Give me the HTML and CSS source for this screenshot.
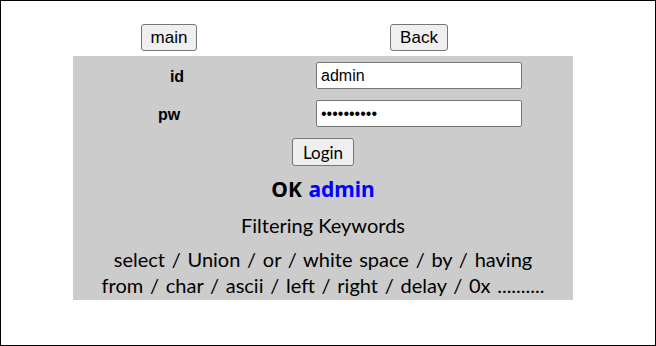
FILE: index.html
```html
<html>
	<head>
		<title>Login</title>
		<link rel="stylesheet" href="styles.css">
	</head>
	<body>
		<div class="Frame">
			<div class="TopRow">
				<div class="TopCell Left"><button class="Btn">main</button></div>
				<div class="TopCell Right"><button class="Btn">Back</button></div>
			</div>

			<div class="Box">
				<form class="LoginForm">
					<div class="Label LabelId">id</div>
					<input class="Field" type="text" value="admin"/>
					<div class="Label LabelPw">pw</div>
					<input class="Field" type="password" value="adminadmin"/>
				</form>
				<div class="LoginRow">
					<button class="Btn BtnLogin">Login</button>
				</div>
				<div class="Result">OK <span class="User">admin</span></div>
				<div class="Title">Filtering Keywords</div>
				<div class="Keywords">
					select / Union / or / white space / by / having<br/>
					from / char / ascii / left / right / delay / 0x ..........
				</div>
			</div>
		</div>
	</body>
</html>
```

FILE: styles.css
```css
html, body {margin: 0; height: 100%; overflow: hidden; background-color: white;}

.Frame {
	box-sizing: border-box;
	height: 346px;
	border: 1px solid black;
	font-family: "Lato", "Noto Sans", sans-serif;
	color: black;
}

.TopRow {
	display: flex;
	width: 500px;
	margin: 23px 0 0 72px;
}
.TopCell {
	display: flex;
	justify-content: center;
}
.TopCell.Left { width: 192px; }
.TopCell.Right { width: 308px; }

.Btn {
	box-sizing: border-box;
	height: 27px;
	padding: 0 9px;
	font-family: "Liberation Sans", Arial, sans-serif;
	font-size: 17px;
	color: black;
	background-color: #efefef;
	border: 1px solid #767676;
	border-radius: 3px;
}

.Box {
	width: 500px;
	margin: 5px 0 0 72px;
	padding: 6px 0 2px 0;
	background-color: #cccccc;
	text-align: center;
}

.LoginForm {
	display: grid;
	grid-template-columns: 200px 206px;
	grid-auto-rows: 27px;
	column-gap: 43px;
	row-gap: 11px;
	margin: 0;
}
.Label {
	font-family: "Liberation Sans", Arial, sans-serif;
	font-weight: bold;
	font-size: 16px;
	line-height: 29px;
	text-align: center;
}
.LabelId { padding-left: 8px; }
.LabelPw { padding-right: 8px; }

.Field {
	box-sizing: border-box;
	height: 27px;
	width: 206px;
	padding: 0 4px;
	font-family: "Liberation Sans", Arial, sans-serif;
	font-size: 16px;
	border: 1px solid #767676;
	border-radius: 2px;
	background-color: white;
}

.LoginRow {
	display: flex;
	justify-content: center;
	margin-top: 11px;
	height: 28px;
}
.BtnLogin {
	height: 28px;
	padding: 0 10px;
	font-family: "Lato", "Noto Sans", sans-serif;
}

.Result {
	margin-top: 10px;
	font-family: "Noto Sans", sans-serif;
	font-size: 21px;
	font-weight: bold;
	line-height: 26px;
	word-spacing: 1px;
}
.User { color: blue; }

.Title {
	margin-top: 10px;
	font-size: 20px;
	line-height: 26px;
}

.Keywords {
	margin-top: 8px;
	font-size: 20px;
	line-height: 26px;
	word-spacing: 1.6px;
}
```
